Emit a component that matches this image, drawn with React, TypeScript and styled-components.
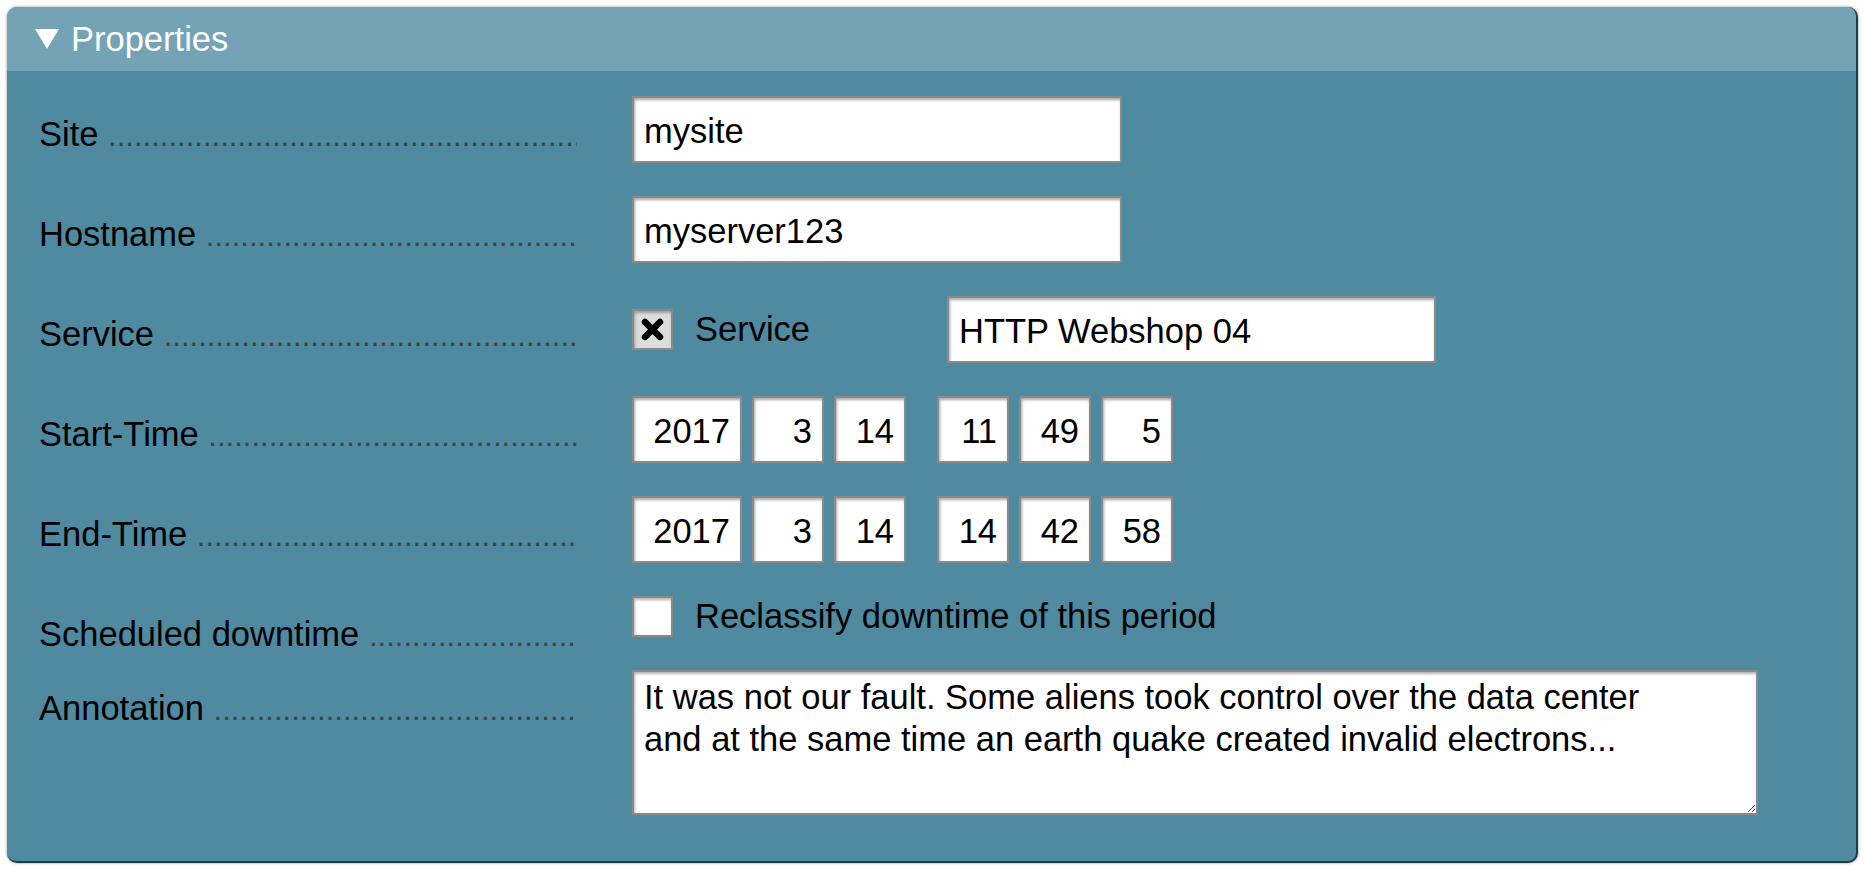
import React from "react";
import styled, { createGlobalStyle } from "styled-components";

const GlobalStyle = createGlobalStyle`
  html, body {
    margin: 0;
    padding: 0;
    background: #ffffff;
  }
  body {
    font-family: "Liberation Sans", Arial, Helvetica, sans-serif;
  }
`;

const Page = styled.div`
  padding: 7px 8px 8px 7px;
`;

const Panel = styled.section`
  background: #4f8aa0;
  border-radius: 10px;
  border-right: 2px solid #1f3d4a;
  border-bottom: 2px solid #1f3d4a;
  box-shadow: 0 0 3px rgba(0, 0, 0, 0.45);
  overflow: hidden;
  font-size: 34.5px;
  color: #000000;
`;

const Header = styled.div`
  height: 64px;
  display: flex;
  align-items: center;
  gap: 12px;
  padding-left: 28px;
  background: #73a3b5;
  color: #ffffff;
  line-height: 64px;
`;

const Body = styled.div`
  display: flex;
  flex-direction: column;
  gap: 33px;
  padding: 25px 0 46px 32px;
`;

const Row = styled.div<{ $h: number }>`
  display: grid;
  grid-template-columns: 538px auto;
  column-gap: 55px;
  align-items: start;
  height: ${({ $h }) => $h}px;
`;

const Label = styled.div`
  padding-top: 19px;
  white-space: nowrap;
  overflow: hidden;
  line-height: normal;
`;

const Dots = styled.span`
  font-size: 0.9em;
  color: #424242;
`;

const Field = styled.input<{ $w: number; $right?: boolean }>`
  box-sizing: border-box;
  width: ${({ $w }) => $w}px;
  height: 67px;
  margin: 0;
  padding: 4px 10px 0;
  border: 2px solid #8a8a8a;
  border-radius: 0;
  background: #ffffff;
  box-shadow: inset 1px 2px 3px rgba(0, 0, 0, 0.35);
  font: inherit;
  color: #000000;
  text-align: ${({ $right }) => ($right ? "right" : "left")};
  outline: none;
`;

const Inline = styled.div`
  display: flex;
  align-items: center;
`;

const DateGroup = styled.div`
  display: flex;
  gap: 10px;
  & + & {
    margin-left: 31px;
  }
`;

const Check = styled.span<{ $checked?: boolean }>`
  box-sizing: border-box;
  width: 41px;
  height: 41px;
  display: flex;
  align-items: center;
  justify-content: center;
  border: 2px solid #8a8a8a;
  background: ${({ $checked }) => ($checked ? "#dddddd" : "#ffffff")};
  box-shadow: inset 1px 2px 3px rgba(0, 0, 0, 0.3);
  flex: none;
`;

const CheckText = styled.span<{ $w?: number }>`
  margin-left: 22px;
  line-height: normal;
  white-space: nowrap;
  ${({ $w }) => ($w ? `width: ${$w}px;` : "")}
`;

const Note = styled.textarea`
  box-sizing: border-box;
  width: 1126px;
  height: 145px;
  margin: 0;
  padding: 4px 10px;
  border: 2px solid #8a8a8a;
  border-radius: 0;
  background: #ffffff;
  box-shadow: inset 1px 2px 3px rgba(0, 0, 0, 0.3);
  font: inherit;
  line-height: 42px;
  color: #000000;
  outline: none;
`;

const DOTS = ".".repeat(80);

const RowLabel = ({ text }: { text: string }) => (
  <Label>
    {text} <Dots>{DOTS}</Dots>
  </Label>
);

const Cross = () => (
  <svg width="23" height="23" viewBox="0 0 23 23">
    <path
      d="M4 4 L19 19 M19 4 L4 19"
      stroke="#000"
      strokeWidth="6.5"
      strokeLinecap="round"
    />
  </svg>
);

const Triangle = () => (
  <svg width="24" height="20" viewBox="0 0 24 20">
    <polygon points="0,0 24,0 12,20" fill="#fff" />
  </svg>
);

const DateFields = ({ values }: { values: number[] }) => (
  <Inline>
    <DateGroup>
      <Field $w={110} $right defaultValue={values[0]} />
      <Field $w={72} $right defaultValue={values[1]} />
      <Field $w={72} $right defaultValue={values[2]} />
    </DateGroup>
    <DateGroup>
      <Field $w={72} $right defaultValue={values[3]} />
      <Field $w={72} $right defaultValue={values[4]} />
      <Field $w={72} $right defaultValue={values[5]} />
    </DateGroup>
  </Inline>
);

const App = () => {
  return (
    <Page>
      <GlobalStyle />
      <Panel>
        <Header>
          <Triangle />
          <span>Properties</span>
        </Header>
        <Body>
          <Row $h={67}>
            <RowLabel text="Site" />
            <Field $w={490} defaultValue="mysite" />
          </Row>
          <Row $h={67}>
            <RowLabel text="Hostname" />
            <Field $w={490} defaultValue="myserver123" />
          </Row>
          <Row $h={67}>
            <RowLabel text="Service" />
            <Inline>
              <Check $checked>
                <Cross />
              </Check>
              <CheckText $w={252}>Service</CheckText>
              <Field $w={489} defaultValue="HTTP Webshop 04" />
            </Inline>
          </Row>
          <Row $h={67}>
            <RowLabel text="Start-Time" />
            <DateFields values={[2017, 3, 14, 11, 49, 5]} />
          </Row>
          <Row $h={67}>
            <RowLabel text="End-Time" />
            <DateFields values={[2017, 3, 14, 14, 42, 58]} />
          </Row>
          <Row $h={41}>
            <RowLabel text="Scheduled downtime" />
            <Inline>
              <Check />
              <CheckText>Reclassify downtime of this period</CheckText>
            </Inline>
          </Row>
          <Row $h={145}>
            <RowLabel text="Annotation" />
            <Note
              defaultValue={
                "It was not our fault. Some aliens took control over the data center\nand at the same time an earth quake created invalid electrons..."
              }
            />
          </Row>
        </Body>
      </Panel>
    </Page>
  );
};

export default App;
